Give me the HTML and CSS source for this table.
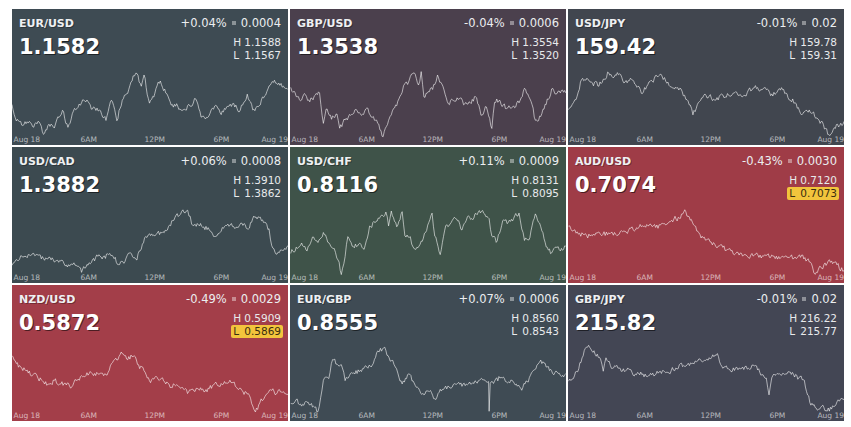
FILE: index.html
```html
<!DOCTYPE html>
<html lang="en">
<head>
<meta charset="utf-8">
<title>FX Board</title>
<link rel="stylesheet" href="styles.css">
</head>
<body>
<div class="board">
  <div class="tile c-eurusd">
    <div class="head">
      <div class="left"><div class="pair">EUR/USD</div><div class="price">1.1582</div></div>
      <div class="right">
        <div class="chg">+0.04%<i class="sep"></i>0.0004</div>
        <div class="hl"><div class="row"><span>H</span><span>1.1588</span></div><div class="row"><span>L</span><span>1.1567</span></div></div>
      </div>
    </div>
    <svg class="chart" data-i="0" viewBox="0 0 276 81"><g class="axis"><text x="1.5" y="77.5">Aug 18</text><text x="68.5" y="77.5">6AM</text><text x="132.5" y="77.5">12PM</text><text x="201.5" y="77.5">6PM</text><text x="276" y="77.5" text-anchor="end">Aug 19</text></g></svg>
  </div>
  <div class="tile c-gbpusd">
    <div class="head">
      <div class="left"><div class="pair">GBP/USD</div><div class="price">1.3538</div></div>
      <div class="right">
        <div class="chg">-0.04%<i class="sep"></i>0.0006</div>
        <div class="hl"><div class="row"><span>H</span><span>1.3554</span></div><div class="row"><span>L</span><span>1.3520</span></div></div>
      </div>
    </div>
    <svg class="chart" data-i="1" viewBox="0 0 276 81"><g class="axis"><text x="1.5" y="77.5">Aug 18</text><text x="68.5" y="77.5">6AM</text><text x="132.5" y="77.5">12PM</text><text x="201.5" y="77.5">6PM</text><text x="276" y="77.5" text-anchor="end">Aug 19</text></g></svg>
  </div>
  <div class="tile c-usdjpy">
    <div class="head">
      <div class="left"><div class="pair">USD/JPY</div><div class="price">159.42</div></div>
      <div class="right">
        <div class="chg">-0.01%<i class="sep"></i>0.02</div>
        <div class="hl"><div class="row"><span>H</span><span>159.78</span></div><div class="row"><span>L</span><span>159.31</span></div></div>
      </div>
    </div>
    <svg class="chart" data-i="2" viewBox="0 0 276 81"><g class="axis"><text x="1.5" y="77.5">Aug 18</text><text x="68.5" y="77.5">6AM</text><text x="132.5" y="77.5">12PM</text><text x="201.5" y="77.5">6PM</text><text x="276" y="77.5" text-anchor="end">Aug 19</text></g></svg>
  </div>
  <div class="tile c-usdcad">
    <div class="head">
      <div class="left"><div class="pair">USD/CAD</div><div class="price">1.3882</div></div>
      <div class="right">
        <div class="chg">+0.06%<i class="sep"></i>0.0008</div>
        <div class="hl"><div class="row"><span>H</span><span>1.3910</span></div><div class="row"><span>L</span><span>1.3862</span></div></div>
      </div>
    </div>
    <svg class="chart" data-i="3" viewBox="0 0 276 81"><g class="axis"><text x="1.5" y="77.5">Aug 18</text><text x="68.5" y="77.5">6AM</text><text x="132.5" y="77.5">12PM</text><text x="201.5" y="77.5">6PM</text><text x="276" y="77.5" text-anchor="end">Aug 19</text></g></svg>
  </div>
  <div class="tile c-usdchf">
    <div class="head">
      <div class="left"><div class="pair">USD/CHF</div><div class="price">0.8116</div></div>
      <div class="right">
        <div class="chg">+0.11%<i class="sep"></i>0.0009</div>
        <div class="hl"><div class="row"><span>H</span><span>0.8131</span></div><div class="row"><span>L</span><span>0.8095</span></div></div>
      </div>
    </div>
    <svg class="chart" data-i="4" viewBox="0 0 276 81"><g class="axis"><text x="1.5" y="77.5">Aug 18</text><text x="68.5" y="77.5">6AM</text><text x="132.5" y="77.5">12PM</text><text x="201.5" y="77.5">6PM</text><text x="276" y="77.5" text-anchor="end">Aug 19</text></g></svg>
  </div>
  <div class="tile c-audusd">
    <div class="head">
      <div class="left"><div class="pair">AUD/USD</div><div class="price">0.7074</div></div>
      <div class="right">
        <div class="chg">-0.43%<i class="sep"></i>0.0030</div>
        <div class="hl"><div class="row"><span>H</span><span>0.7120</span></div><div class="row hit"><span>L</span><span>0.7073</span></div></div>
      </div>
    </div>
    <svg class="chart" data-i="5" viewBox="0 0 276 81"><g class="axis"><text x="1.5" y="77.5">Aug 18</text><text x="68.5" y="77.5">6AM</text><text x="132.5" y="77.5">12PM</text><text x="201.5" y="77.5">6PM</text><text x="276" y="77.5" text-anchor="end">Aug 19</text></g></svg>
  </div>
  <div class="tile c-nzdusd">
    <div class="head">
      <div class="left"><div class="pair">NZD/USD</div><div class="price">0.5872</div></div>
      <div class="right">
        <div class="chg">-0.49%<i class="sep"></i>0.0029</div>
        <div class="hl"><div class="row"><span>H</span><span>0.5909</span></div><div class="row hit"><span>L</span><span>0.5869</span></div></div>
      </div>
    </div>
    <svg class="chart" data-i="6" viewBox="0 0 276 81"><g class="axis"><text x="1.5" y="77.5">Aug 18</text><text x="68.5" y="77.5">6AM</text><text x="132.5" y="77.5">12PM</text><text x="201.5" y="77.5">6PM</text><text x="276" y="77.5" text-anchor="end">Aug 19</text></g></svg>
  </div>
  <div class="tile c-eurgbp">
    <div class="head">
      <div class="left"><div class="pair">EUR/GBP</div><div class="price">0.8555</div></div>
      <div class="right">
        <div class="chg">+0.07%<i class="sep"></i>0.0006</div>
        <div class="hl"><div class="row"><span>H</span><span>0.8560</span></div><div class="row"><span>L</span><span>0.8543</span></div></div>
      </div>
    </div>
    <svg class="chart" data-i="7" viewBox="0 0 276 81"><g class="axis"><text x="1.5" y="77.5">Aug 18</text><text x="68.5" y="77.5">6AM</text><text x="132.5" y="77.5">12PM</text><text x="201.5" y="77.5">6PM</text><text x="276" y="77.5" text-anchor="end">Aug 19</text></g></svg>
  </div>
  <div class="tile c-gbpjpy">
    <div class="head">
      <div class="left"><div class="pair">GBP/JPY</div><div class="price">215.82</div></div>
      <div class="right">
        <div class="chg">-0.01%<i class="sep"></i>0.02</div>
        <div class="hl"><div class="row"><span>H</span><span>216.22</span></div><div class="row"><span>L</span><span>215.77</span></div></div>
      </div>
    </div>
    <svg class="chart" data-i="8" viewBox="0 0 276 81"><g class="axis"><text x="1.5" y="77.5">Aug 18</text><text x="68.5" y="77.5">6AM</text><text x="132.5" y="77.5">12PM</text><text x="201.5" y="77.5">6PM</text><text x="276" y="77.5" text-anchor="end">Aug 19</text></g></svg>
  </div>
</div>
<script src="app.js"></script>
</body>
</html>
```

FILE: styles.css
```css
body {
  margin: 0;
  background: #ffffff;
  font-family: "DejaVu Sans", "Noto Sans", sans-serif;
}

.board {
  display: grid;
  grid-template-columns: repeat(3, 276px);
  grid-auto-rows: 136px;
  gap: 2px;
  padding: 9px 0 0 12px;
}

.tile {
  display: flex;
  flex-direction: column;
  overflow: hidden;
  color: #ffffff;
}

.c-eurusd { background: #3e4b53; }
.c-gbpusd { background: #4b404d; }
.c-usdjpy { background: #41464f; }
.c-usdcad { background: #3c4a50; }
.c-usdchf { background: #3f5349; }
.c-audusd { background: #9f3c47; }
.c-nzdusd { background: #a33e49; }
.c-eurgbp { background: #3f4b54; }
.c-gbpjpy { background: #434654; }

.head {
  height: 55px;
  box-sizing: border-box;
  padding: 8px 7px 0 7px;
  display: flex;
  justify-content: space-between;
  align-items: flex-start;
}

.pair {
  font-size: 11px;
  font-weight: bold;
  line-height: 13px;
  color: #eef0f2;
  text-shadow: 1px 1px 0 rgba(0, 0, 0, 0.3);
}

.price {
  margin-top: 5px;
  font-size: 21px;
  font-weight: bold;
  line-height: 25px;
  color: #ffffff;
  text-shadow: 1px 1px 0 rgba(0, 0, 0, 0.55);
}

.right {
  display: flex;
  flex-direction: column;
  align-items: flex-end;
}

.chg {
  font-size: 11.5px;
  line-height: 13px;
  white-space: nowrap;
  color: #eceef0;
}

.sep {
  display: inline-block;
  width: 4px;
  height: 4px;
  margin: 0 5px;
  vertical-align: 2px;
  background: rgba(255, 255, 255, 0.4);
}

.hl {
  margin-top: 6px;
  margin-right: -2px;
  display: flex;
  flex-direction: column;
}

.row {
  display: flex;
  justify-content: space-between;
  gap: 3px;
  padding: 0 2px;
  font-size: 10.5px;
  line-height: 13px;
  border-radius: 2px;
  color: #e8eaec;
}

.row.hit {
  background: #f2c43c;
  color: #3a2e10;
}

.chart {
  display: block;
  width: 276px;
  height: 81px;
}

.chart .line {
  fill: none;
  stroke: rgba(255, 255, 255, 0.58);
  stroke-width: 1;
  stroke-linejoin: miter;
}

.chart text {
  font-family: "DejaVu Sans", sans-serif;
  font-size: 7.5px;
  fill: rgba(255, 255, 255, 0.62);
}
```

FILE: app.js
```js
(function () {
  var LEFT = [12, 290, 568];
  var OFF = [9, 10, 10];
  var DATA = [
    [[22,145],[30,190],[40,205],[50,195],[60,210],[70,195],[80,230],[90,200],[100,215],[115,160],[125,215],[135,165],[150,140],[160,130],[170,160],[185,165],[195,190],[205,135],[215,190],[225,130],[235,110],[245,60],[250,50],[260,90],[265,60],[275,140],[285,110],[295,75],[305,110],[315,150],[325,145],[335,165],[345,150],[360,130],[370,185],[380,180],[395,150],[405,170],[415,160],[430,145],[440,165],[455,115],[465,165],[475,155],[485,125],[495,90],[505,75],[515,90],[530,100]],
    [[535,95],[545,120],[555,130],[560,110],[570,140],[580,115],[588,110],[595,200],[600,160],[610,190],[620,175],[625,215],[635,190],[645,180],[655,160],[665,175],[675,155],[685,185],[695,200],[705,240],[715,190],[720,175],[730,150],[740,110],[745,85],[750,90],[755,65],[762,50],[770,85],[775,50],[780,120],[790,110],[800,85],[805,60],[815,90],[825,140],[835,135],[845,125],[855,145],[865,140],[875,125],[885,175],[895,150],[905,215],[910,140],[920,130],[930,155],[945,150],[955,140],[965,100],[975,130],[985,190],[995,180],[1005,145],[1015,100],[1025,115],[1035,100],[1041,110]],
    [[1046,160],[1060,130],[1070,70],[1080,65],[1090,80],[1100,90],[1110,70],[1120,50],[1130,65],[1140,55],[1150,80],[1160,70],[1170,90],[1180,110],[1190,90],[1200,75],[1210,65],[1218,60],[1225,75],[1235,90],[1245,95],[1255,110],[1262,130],[1270,145],[1275,175],[1285,140],[1295,115],[1305,120],[1315,135],[1330,115],[1345,120],[1360,115],[1375,110],[1390,90],[1400,100],[1410,100],[1420,115],[1430,110],[1440,100],[1450,125],[1465,140],[1475,175],[1485,165],[1495,170],[1505,185],[1515,205],[1525,235],[1535,210],[1545,205],[1553,195]],
    [[22,215],[30,195],[40,185],[50,190],[60,180],[70,185],[80,195],[90,190],[100,205],[110,200],[120,215],[130,210],[140,215],[150,235],[160,210],[170,200],[180,190],[190,190],[200,185],[210,195],[220,210],[230,205],[240,180],[250,195],[260,170],[268,130],[275,120],[285,130],[300,115],[310,100],[320,80],[330,65],[343,55],[350,70],[355,100],[365,95],[375,100],[385,110],[395,130],[405,120],[415,100],[430,100],[445,90],[455,110],[465,80],[475,70],[485,90],[495,110],[500,160],[510,180],[520,175],[530,160]],
    [[535,180],[545,160],[555,150],[565,170],[575,130],[585,150],[595,120],[605,150],[615,165],[622,200],[628,240],[635,190],[640,130],[650,160],[660,150],[670,165],[680,100],[690,90],[700,70],[710,60],[715,100],[720,55],[730,105],[740,55],[745,130],[755,130],[760,160],[765,170],[775,140],[785,115],[795,60],[800,130],[810,180],[820,100],[830,90],[840,80],[850,110],[860,70],[870,80],[880,55],[890,60],[900,75],[905,130],[915,145],[925,80],[935,90],[945,75],[955,60],[960,110],[965,140],[975,135],[985,65],[995,100],[1005,160],[1015,180],[1025,165],[1035,170],[1041,160]],
    [[1046,100],[1060,120],[1075,125],[1090,130],[1105,125],[1120,120],[1135,125],[1150,115],[1165,110],[1180,100],[1190,95],[1200,100],[1215,100],[1225,95],[1240,80],[1250,75],[1260,55],[1270,80],[1280,100],[1290,135],[1300,140],[1315,155],[1330,165],[1345,175],[1360,185],[1375,190],[1390,185],[1405,190],[1420,185],[1435,195],[1450,190],[1465,195],[1475,185],[1485,200],[1495,220],[1500,240],[1510,220],[1520,215],[1530,200],[1540,215],[1553,230]],
    [[22,75],[30,100],[40,115],[50,120],[60,130],[70,140],[80,150],[90,160],[100,150],[110,160],[120,155],[130,170],[140,150],[150,135],[160,125],[170,130],[180,130],[195,135],[205,100],[215,90],[225,70],[235,85],[245,75],[255,100],[265,120],[275,150],[285,140],[295,140],[305,155],[315,165],[325,160],[335,170],[345,185],[355,175],[365,170],[375,180],[385,175],[395,160],[405,165],[415,155],[425,155],[435,165],[445,175],[455,190],[465,220],[470,240],[478,215],[490,190],[500,180],[510,185],[520,180],[530,185]],
    [[535,215],[545,205],[555,220],[565,215],[575,225],[585,240],[590,200],[595,150],[605,140],[612,85],[620,100],[630,110],[635,150],[645,130],[655,120],[665,125],[675,110],[685,100],[695,65],[700,55],[710,60],[718,90],[725,100],[732,130],[740,160],[750,130],[760,150],[770,170],[780,190],[790,180],[800,200],[810,175],[820,165],[830,170],[840,160],[850,165],[860,160],[870,155],[880,150],[890,145],[899,150],[900,235],[902,155],[910,150],[920,140],[930,150],[940,145],[950,160],[960,175],[970,150],[980,120],[990,100],[995,90],[1005,110],[1015,120],[1025,125],[1035,130],[1041,125]],
    [[1046,150],[1055,140],[1065,110],[1075,60],[1085,50],[1095,70],[1105,85],[1110,120],[1115,80],[1125,110],[1135,100],[1145,120],[1155,110],[1165,130],[1175,125],[1185,135],[1195,130],[1205,130],[1215,120],[1225,125],[1235,120],[1250,100],[1260,110],[1275,100],[1290,90],[1305,80],[1320,70],[1330,110],[1345,120],[1360,110],[1375,115],[1390,105],[1400,130],[1410,140],[1415,190],[1420,140],[1430,130],[1440,125],[1450,120],[1460,130],[1470,140],[1480,150],[1490,210],[1500,230],[1510,225],[1520,235],[1530,230],[1540,210],[1553,200]]
  ];

  function rng(seed) {
    return function () {
      seed |= 0; seed = seed + 0x6D2B79F5 | 0;
      var t = Math.imul(seed ^ seed >>> 15, 1 | seed);
      t = t + Math.imul(t ^ t >>> 7, 61 | t) ^ t;
      return ((t ^ t >>> 14) >>> 0) / 4294967296;
    };
  }

  var NS = "http://www.w3.org/2000/svg";
  var charts = document.querySelectorAll("svg.chart");
  for (var k = 0; k < charts.length; k++) {
    var svg = charts[k];
    var i = +svg.getAttribute("data-i");
    var col = i % 3, row = Math.floor(i / 3);
    var pts = DATA[i].map(function (p) {
      return [p[0] / 1.84 - LEFT[col], p[1] / 2.93 - OFF[row]];
    });
    var rand = rng(1000 + i * 77);
    var n = 0;
    var d = "M" + pts[0][0].toFixed(2) + " " + pts[0][1].toFixed(2);
    for (var j = 1; j < pts.length; j++) {
      var a = pts[j - 1], b = pts[j];
      var dx = b[0] - a[0];
      var steps = Math.max(1, Math.round(dx / 1.2));
      for (var s = 1; s <= steps; s++) {
        var t = s / steps;
        var x = a[0] + dx * t;
        var y = a[1] + (b[1] - a[1]) * t;
        n = 0.35 * n + (rand() - 0.5) * 5.2;
        var yy = s === steps ? y + n * 0.4 : y + n;
        d += "L" + x.toFixed(2) + " " + yy.toFixed(2);
      }
    }
    var path = document.createElementNS(NS, "path");
    path.setAttribute("class", "line");
    path.setAttribute("d", d);
    svg.insertBefore(path, svg.firstChild);
  }
})();
```
